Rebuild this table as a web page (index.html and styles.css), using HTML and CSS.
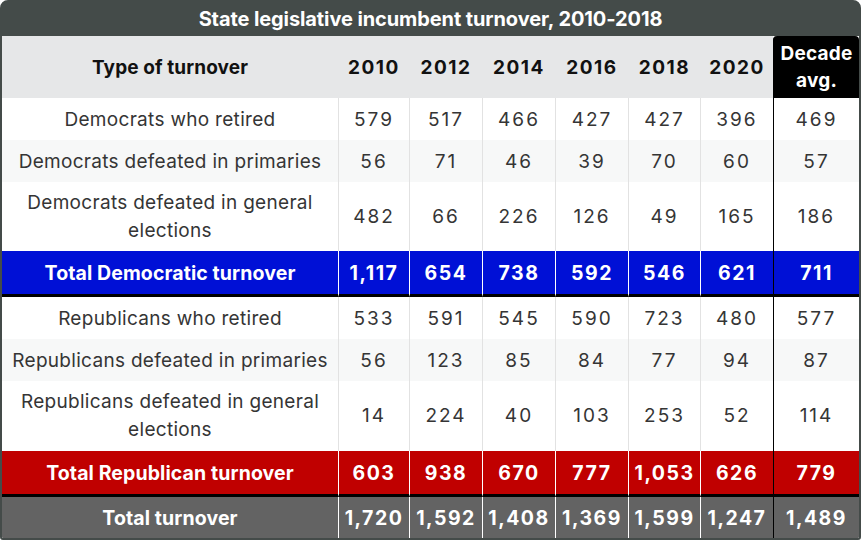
FILE: index.html
```html
<!DOCTYPE html>
<html>
<head>
<meta charset="utf-8">
<link rel="stylesheet" href="styles.css">
</head>
<body>
<div class="frame">
  <div class="title">State legislative incumbent turnover, 2010-2018</div>
  <table class="tbl">
    <colgroup>
      <col class="c-type"><col class="c-y1"><col class="c-y"><col class="c-y"><col class="c-y"><col class="c-y2"><col class="c-y"><col class="c-avg">
    </colgroup>
    <thead>
      <tr class="head">
        <th>Type of turnover</th><th>2010</th><th>2012</th><th>2014</th><th>2016</th><th>2018</th><th>2020</th><th class="avg-h">Decade avg.</th>
      </tr>
    </thead>
    <tbody>
      <tr class="r"><td>Democrats who retired</td><td>579</td><td>517</td><td>466</td><td>427</td><td>427</td><td>396</td><td class="avg">469</td></tr>
      <tr class="r alt"><td>Democrats defeated in primaries</td><td>56</td><td>71</td><td>46</td><td>39</td><td>70</td><td>60</td><td class="avg">57</td></tr>
      <tr class="r tall"><td>Democrats defeated in general elections</td><td>482</td><td>66</td><td>226</td><td>126</td><td>49</td><td>165</td><td class="avg">186</td></tr>
      <tr class="tot dem"><td>Total Democratic turnover</td><td>1,117</td><td>654</td><td>738</td><td>592</td><td>546</td><td>621</td><td class="avg">711</td></tr>
      <tr class="r"><td>Republicans who retired</td><td>533</td><td>591</td><td>545</td><td>590</td><td>723</td><td>480</td><td class="avg">577</td></tr>
      <tr class="r alt"><td>Republicans defeated in primaries</td><td>56</td><td>123</td><td>85</td><td>84</td><td>77</td><td>94</td><td class="avg">87</td></tr>
      <tr class="r tall2"><td>Republicans defeated in general elections</td><td>14</td><td>224</td><td>40</td><td>103</td><td>253</td><td>52</td><td class="avg">114</td></tr>
      <tr class="tot rep"><td>Total Republican turnover</td><td>603</td><td>938</td><td>670</td><td>777</td><td>1,053</td><td>626</td><td class="avg">779</td></tr>
      <tr class="tot all"><td>Total turnover</td><td>1,720</td><td>1,592</td><td>1,408</td><td>1,369</td><td>1,599</td><td>1,247</td><td class="avg">1,489</td></tr>
    </tbody>
  </table>
</div>
</body>
</html>
```

FILE: styles.css
```css
html, body {
  margin: 0;
  padding: 0;
  background: #ffffff;
}

body {
  font-family: Inter, "Open Sans", sans-serif;
}

.frame {
  width: 857px;
  border: 2px solid #444b49;
  border-radius: 8px 8px 3px 3px;
  background: #444b49;
  overflow: hidden;
}

.title {
  height: 34px;
  line-height: 34px;
  text-align: center;
  color: #ffffff;
  font-weight: 700;
  font-size: 20px;
  letter-spacing: -0.1px;
}

.tbl {
  width: 857px;
  table-layout: fixed;
  border-collapse: separate;
  border-spacing: 0;
  background: #ffffff;
}

.c-type { width: 336px; }
.c-y1 { width: 71px; }
.c-y { width: 73px; }
.c-y2 { width: 72px; }
.c-avg { width: 86px; }

.tbl th,
.tbl td {
  padding: 0 2px;
  text-align: center;
  border-left: 1px solid #e2e2e2;
  box-sizing: border-box;
  white-space: normal;
}

.tbl th:first-child,
.tbl td:first-child {
  border-left: none;
}

.head th {
  height: 62px;
  background: #e6e7e8;
  color: #111111;
  font-size: 19px;
  font-weight: 700;
  border-left-color: #e6e7e8;
  letter-spacing: 1.5px;
}

.head th:first-child {
  letter-spacing: 0.1px;
}

.head th.avg-h {
  background: #000000;
  color: #ffffff;
  border-left: 1px solid #000000;
  border-radius: 4px 4px 0 0;
  line-height: 27px;
  letter-spacing: 0.2px;
}

.r td {
  height: 42px;
  font-size: 19px;
  color: #353535;
  letter-spacing: 2px;
}

.r td:first-child {
  letter-spacing: 0.3px;
}

.r.alt td {
  background: #f7f8f8;
}

.r.tall td {
  height: 69px;
  line-height: 28px;
}

.r.tall2 td {
  height: 70px;
  line-height: 28px;
}

.tbl td.avg {
  border-left: 1px solid #000000;
}

.tot td {
  font-size: 19.5px;
  font-weight: 700;
  color: #ffffff;
  border-left-color: #ffffff;
  letter-spacing: 1.5px;
}

.tot td:first-child {
  letter-spacing: 0.1px;
}

.tot.dem td {
  height: 46px;
  background: #0010d6;
  border-bottom: 3px solid #000000;
}

.tot.rep td {
  height: 46px;
  background: #c00000;
  border-bottom: 3px solid #000000;
}

.tot.all td {
  height: 41px;
  background: #636363;
}
```
